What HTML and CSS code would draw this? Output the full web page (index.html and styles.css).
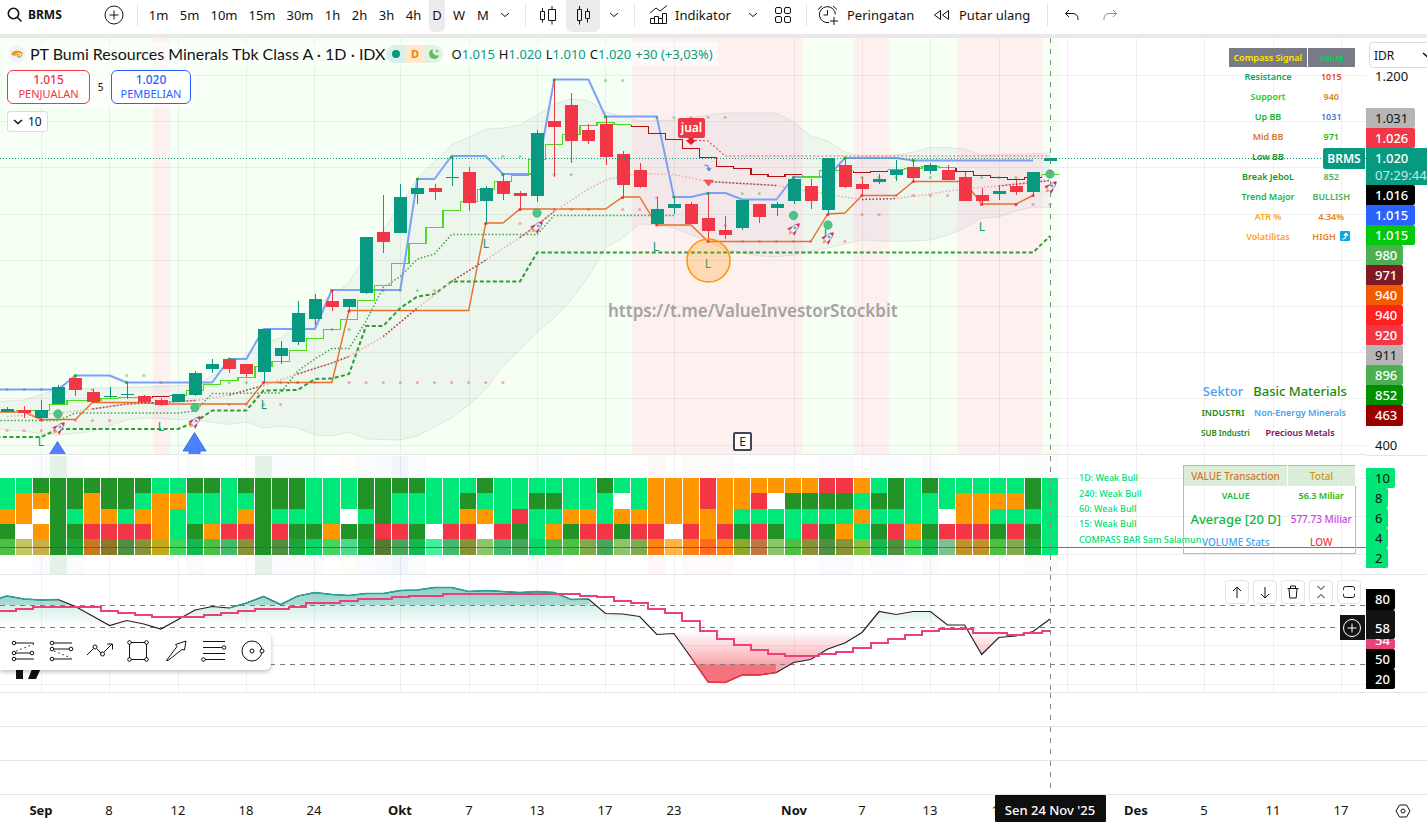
FILE: index.html
```html
<!DOCTYPE html>
<html lang="id">
<head>
<meta charset="utf-8">
<title>BRMS 1.020</title>
<link rel="stylesheet" href="styles.css">
</head>
<body>
<header class="toolbar">
  <button class="tool symbol"><svg width="16" height="16" viewBox="0 0 16 16" class="ico bold"><circle cx="6.5" cy="6.5" r="5.2"/><path d="M10.5 10.500l4 4"/></svg>BRMS</button>
  <button class="tool icon-only" aria-label="Bandingkan"><svg width="20" height="20" viewBox="0 0 20 20" class="ico"><circle cx="10" cy="10" r="9"/><path d="M10 5.500v9M5.500 10h9"/></svg></button>
  <span class="rule"></span>
  <nav class="intervals">
    <button class="tool mid">1m</button><button class="tool mid">5m</button><button class="tool wide">10m</button><button class="tool wide">15m</button><button class="tool wide">30m</button><button class="tool hour">1h</button><button class="tool hour">2h</button><button class="tool hour">3h</button><button class="tool hour">4h</button><button class="tool slim active">D</button><button class="tool week">W</button><button class="tool slim">M</button><button class="tool chev" aria-label="Interval"><svg width="10" height="6" viewBox="0 0 10 6" class="ico"><path d="M1 1l4 3.500 4-3.500"/></svg></button>
  </nav>
  <span class="rule"></span>
  <button class="tool candle" aria-label="Lilin"><svg width="20" height="20" viewBox="0 0 20 20" class="ico"><path d="M2.500 6.500h4v8h-4zM4.500 3v3.500M4.500 14.500v3M10.500 4.500h7v11h-7zM14 1v3.500M14 15.500v4"/></svg></button>
  <button class="tool candle active" aria-label="Jenis grafik"><svg width="20" height="20" viewBox="0 0 20 20" class="ico"><path d="M4.500 4.500h4v11h-4zM6.500 1v3.500M6.500 15.500v4M12.500 6.500h4v7h-4zM14.500 3.500v3M14.500 13.500v4"/></svg></button>
  <button class="tool chev" aria-label="Pilihan grafik"><svg width="10" height="6" viewBox="0 0 10 6" class="ico"><path d="M1 1l4 3.500 4-3.500"/></svg></button>
  <span class="rule"></span>
  <button class="tool labelled indicator"><svg width="20" height="20" viewBox="0 0 20 20" class="ico"><path d="M1 8l6-5 4 3 7-5.500M1.500 18.500v-5h4v5zM5.500 13.500v-2h4v7M9.500 13.500h4v5M13.500 13.500v-5h4v10h-12"/></svg>Indikator</button>
  <button class="tool chev" aria-label="Favorit"><svg width="10" height="6" viewBox="0 0 10 6" class="ico"><path d="M1 1l4 3.500 4-3.500"/></svg></button>
  <button class="tool icon-only" aria-label="Templat"><svg width="18" height="18" viewBox="0 0 18 18" class="ico"><rect x="1.500" y="1.500" width="6" height="6" rx="1.500"/><rect x="10.500" y="1.500" width="6" height="6" rx="1.500"/><rect x="1.500" y="10.500" width="6" height="6" rx="1.500"/><rect x="10.500" y="10.500" width="6" height="6" rx="1.500"/></svg></button>
  <span class="rule"></span>
  <button class="tool labelled alarm"><svg width="22" height="22" viewBox="0 0 22 22" class="ico"><path d="M18.400 10.500A8 8 0 1 0 12 18.500M10.500 6v5h-4M1 5.500L5 2M16 2l4 3.500M17 13v8M13 17h8"/></svg>Peringatan</button>
  <button class="tool labelled replay"><svg width="18" height="12" viewBox="0 0 18 12" class="ico"><path d="M7.500 1.500v9L1.500 6zM15.500 1.500v9L9.500 6z"/></svg>Putar ulang</button>
  <span class="rule"></span>
  <button class="tool history" aria-label="Urungkan"><svg width="16" height="12" viewBox="0 0 16 12" class="ico"><path d="M5 1L1.500 4.500 5 8M1.500 4.500H9a5 5 0 0 1 5 5v1.500"/></svg></button>
  <button class="tool history faded" aria-label="Ulangi"><svg width="16" height="12" viewBox="0 0 16 12" class="ico"><path d="M11 1l3.500 3.500L11 8M14.500 4.500H7a5 5 0 0 0-5 5v1.500"/></svg></button>
</header>

<main class="chart">
  <section class="pane price-pane">
    <svg class="plot" id="price"></svg>
    <div class="legend">
      <div class="legend-row">
        <svg width="18" height="18" viewBox="0 0 18 18"><circle cx="9" cy="9" r="9" fill="#f0f3fa"/><path d="M3 9c2-4 8-5 12-1l-1 2c-1-2-4-3-6-1h4v1.500H7L5.500 11 3 9z" fill="#e8a01c"/><path d="M9 11c2 2 4 1 5-1" stroke="#b5651d" fill="none"/></svg>
        <h1 class="title">PT Bumi Resources Minerals Tbk Class A · 1D · IDX</h1>
        <div class="status"><span class="st open"><i class="dot"></i></span><span class="st delay">D</span><span class="st night"><svg width="12" height="12" viewBox="0 0 12 12"><path d="M5 1a5 5 0 1 0 6 6A4.500 4.500 0 0 1 5 1z" fill="#66bb6a"/><path d="M9 1.500v3M7.500 3h3" stroke="#66bb6a"/></svg></span></div>
        <div class="ohlc"><span>O<b>1.015</b></span><span>H<b>1.020</b></span><span>L<b>1.010</b></span><span>C<b>1.020</b></span><b>+30 (+3,03%)</b></div>
      </div>
      <div class="trade">
        <button class="order sell"><strong>1.015</strong><span>PENJUALAN</span></button>
        <span class="spread">5</span>
        <button class="order buy"><strong>1.020</strong><span>PEMBELIAN</span></button>
      </div>
      <button class="collapse"><svg width="10" height="6" viewBox="0 0 10 6" class="ico bold"><path d="M1 1l4 3.500 4-3.500"/></svg>10</button>
    </div>
    <table class="compass">
      <thead><tr><th class="yellow">Compass Signal</th><th class="lime">Value</th></tr></thead>
      <tbody>
        <tr><td class="c-sea">Resistance</td><td class="c-red">1015</td></tr>
        <tr><td class="c-lime">Support</td><td class="c-gold">940</td></tr>
        <tr><td class="c-green">Up BB</td><td class="c-blue">1031</td></tr>
        <tr><td class="c-rust">Mid BB</td><td class="c-leaf">971</td></tr>
        <tr><td class="c-forest">Low BB</td><td></td></tr>
        <tr><td class="c-forest">Break JeboL</td><td class="c-soft">852</td></tr>
        <tr><td class="c-green">Trend Major</td><td class="c-soft">BULLISH</td></tr>
        <tr><td class="c-amber">ATR %</td><td class="c-orange">4.34%</td></tr>
        <tr><td class="c-amber">Volatilitas</td><td class="c-orange">HIGH <svg class="up" width="10" height="10" viewBox="0 0 10 10"><rect width="10" height="10" rx="1" fill="#0ea5e9"/><path d="M2.500 8C5.500 8 6 6.500 6 3M4 4.500l2-2 2 2" fill="none" stroke="#fff" stroke-width="1.400"/></svg></td></tr>
      </tbody>
    </table>
    <table class="sector">
      <tr class="lead"><td class="c-sky">Sektor</td><td class="c-dark">Basic Materials</td></tr>
      <tr><td class="c-dark">INDUSTRI</td><td class="c-sky">Non-Energy Minerals</td></tr>
      <tr><td class="c-dark tiny">SUB Industri</td><td class="c-plum">Precious Metals</td></tr>
    </table>
    <span class="ticker">BRMS</span>
  </section>
  <aside class="axis price-axis">
    <label class="currency"><select aria-label="Mata uang"><option>IDR</option></select><svg width="10" height="6" viewBox="0 0 10 6" class="ico bold"><path d="M1 1l4 3.500 4-3.500"/></svg></label>
    <span class="clipped">1.200</span>
    <div class="tags">
      <span class="tag t-grey">1.031</span><span class="tag t-red">1.026</span>
      <span class="tag last">1.020<small>07:29:44</small></span>
      <span class="tag t-black">1.016</span><span class="tag t-blue">1.015</span><span class="tag t-lime">1.015</span>
      <span class="tag short t-green">980</span><span class="tag short t-wine">971</span><span class="tag short t-orange">940</span><span class="tag short t-scarlet">940</span><span class="tag short t-red">920</span><span class="tag short t-grey">911</span><span class="tag short t-green">896</span><span class="tag short t-forest">852</span><span class="tag short t-maroon">463</span>
      <span class="plain">400</span>
    </div>
  </aside>

  <section class="pane bar-pane">
    <svg class="plot" id="bars"></svg>
    <table class="value">
      <thead><tr><th class="c-rust">VALUE Transaction</th><th class="c-gold2">Total</th></tr></thead>
      <tbody>
        <tr class="amount"><td class="c-green">VALUE</td><td class="c-leaf">56.3 Miliar</td></tr>
        <tr class="avg"><td class="c-green">Average [20 D]</td><td class="c-violet">577.73 Miliar</td></tr>
        <tr class="vol"><td class="c-sky">VOLUME Stats</td><td class="c-crimson">LOW</td></tr>
      </tbody>
    </table>
  </section>
  <aside class="axis bar-axis"><span class="tag n10">10</span><span class="tag n">8</span><span class="tag n">6</span><span class="tag n">4</span><span class="tag n">2</span></aside>

  <section class="pane osc-pane">
    <svg class="plot" id="osc"></svg>
    <div class="pane-tools">
      <button aria-label="Naik"><svg width="16" height="16" viewBox="0 0 16 16" class="ico"><path d="M8 14V3M4 7l4-4 4 4"/></svg></button>
      <button aria-label="Turun"><svg width="16" height="16" viewBox="0 0 16 16" class="ico"><path d="M8 3v11M4 10l4 4 4-4"/></svg></button>
      <button aria-label="Hapus"><svg width="16" height="16" viewBox="0 0 16 16" class="ico"><path d="M2.500 4.500h11M5.500 4V2h5v2M4 5l.8 9h6.400l.8-9"/></svg></button>
      <button aria-label="Ciutkan"><svg width="16" height="16" viewBox="0 0 16 16" class="ico"><path d="M4.500 2L8 5.500 11.500 2M4.500 14L8 10.500l3.500 3.500"/></svg></button>
      <button aria-label="Perbesar"><svg width="16" height="16" viewBox="0 0 16 16" class="ico"><path d="M2.500 6V4.500a2 2 0 0 1 2-2h7a2 2 0 0 1 2 2V6M2.500 10v1.500a2 2 0 0 0 2 2h7a2 2 0 0 0 2-2V10"/></svg></button>
    </div>
    <button class="add" aria-label="Tambah"><svg width="20" height="20" viewBox="0 0 20 20" class="ico"><circle cx="10" cy="10" r="8.500"/><path d="M10 5.500v9M5.500 10h9"/></svg></button>
    <div class="draw-tools">
      <button aria-label="Posisi beli"><svg width="26" height="26" viewBox="0 0 26 26" class="ico"><path d="M4.500 5H23M4.500 15H19M4.500 21H23"/><path d="M5 13L23 6" stroke-dasharray="1.500 3"/><circle cx="3" cy="5" r="1.800"/><circle cx="3" cy="15" r="1.800"/><circle cx="21" cy="15" r="1.800"/><circle cx="3" cy="21" r="1.800"/></svg></button>
      <button aria-label="Posisi jual"><svg width="26" height="26" viewBox="0 0 26 26" class="ico"><path d="M4.500 5H23M4.500 11H20M4.500 21H23"/><path d="M5 13L22 20" stroke-dasharray="1.500 3"/><circle cx="3" cy="5" r="1.800"/><circle cx="3" cy="11" r="1.800"/><circle cx="22" cy="11" r="1.800"/><circle cx="3" cy="21" r="1.800"/></svg></button>
      <button aria-label="Jalur"><svg width="26" height="26" viewBox="0 0 26 26" class="ico"><path d="M0 17l6.500-6.500M10 11l4 4M17 14l8-8M20 6h5.500v5.500"/><circle cx="8" cy="9" r="2"/><circle cx="15.500" cy="16" r="2"/></svg></button>
      <button aria-label="Persegi"><svg width="26" height="26" viewBox="0 0 26 26" class="ico"><path d="M6 4.500h14M6 21.500h14M4.500 6v14M21.500 6v14"/><circle cx="4.500" cy="4.500" r="1.800"/><circle cx="21.500" cy="4.500" r="1.800"/><circle cx="4.500" cy="21.500" r="1.800"/><circle cx="21.500" cy="21.500" r="1.800"/></svg></button>
      <button aria-label="Panah"><svg width="26" height="26" viewBox="0 0 26 26" class="ico"><path d="M3.500 22.500L14 8.500l-1.500-2L23 3l-1.500 9-2.500-.5L5 22.500z"/></svg></button>
      <button aria-label="Retracement"><svg width="26" height="26" viewBox="0 0 26 26" class="ico"><path d="M2 3.500h22M2 9.500h19M2 15.500h22M4 21.500h20"/><circle cx="23" cy="9.500" r="1.800"/><circle cx="2.500" cy="21.500" r="1.800"/></svg></button>
      <button aria-label="Lingkaran"><svg width="26" height="26" viewBox="0 0 26 26" class="ico"><circle cx="13" cy="13" r="10"/><circle cx="13" cy="13" r="2"/><circle cx="23" cy="13" r="2" fill="#fff"/></svg></button>
    </div>
  </section>
  <aside class="axis osc-axis"><span class="tag o80">80</span><span class="tag o58">58</span><span class="tag o54">54</span><span class="tag o50">50</span><span class="tag o50">20</span></aside>

  <section class="pane blank"><svg class="plot cross"></svg></section><aside class="axis"></aside>
  <section class="pane blank"><svg class="plot cross"></svg></section><aside class="axis"></aside>
  <section class="pane blank"><svg class="plot cross"></svg></section><aside class="axis"></aside>

  <section class="time"><svg class="plot" id="time"></svg></section>
  <aside class="time corner"><button aria-label="Pengaturan"><svg width="16" height="16" viewBox="0 0 16 16" class="ico"><path d="M4.500 2h7L15 8l-3.500 6h-7L1 8z"/><circle cx="8" cy="8" r="2"/></svg></button></aside>
</main>
<script src="chart.js"></script>
</body>
</html>
```
FILE: styles.css
```css
* { box-sizing: border-box; }
body { margin: 0; background: #fff; color: #131313; font: 14px/20px "Noto Sans", sans-serif; }
button { border: 0; background: none; padding: 0; margin: 0; font: inherit; color: inherit; cursor: pointer; }
.ico { fill: none; stroke: currentColor; stroke-width: 1; flex: none; }
.ico.bold { stroke-width: 1.6; }

.toolbar { display: flex; align-items: flex-start; height: 38px; border-bottom: 4px solid #e9e9ea; overflow: hidden; }
.tool { display: flex; align-items: center; justify-content: center; height: 32px; padding-bottom: 2px; border-radius: 0 0 6px 6px; font-size: 13px; white-space: nowrap; flex: none; }
.tool.active { background: #ebebeb; }
.symbol { width: 97px; justify-content: flex-start; gap: 5px; padding-left: 7px; font-weight: 700; font-size: 12px; }
.icon-only { width: 33px; }
.rule { width: 1px; height: 22px; margin: 4px 5px 0 7px; background: #e3e3e5; flex: none; }
.intervals { display: flex; }
.mid { width: 31px; }
.wide { width: 38px; }
.hour { width: 27px; }
.slim { width: 16px; margin-left: 2px; }
.week { width: 28px; }
.chev { width: 27px; }
.candle { width: 34px; margin-right: 1px; }
.candle.active { margin: 0; }
.labelled { justify-content: flex-start; }
.indicator { width: 99px; gap: 6px; padding-left: 9px; }
.alarm { width: 106px; gap: 8px; padding-left: 5px; }
.replay { width: 122px; gap: 8px; padding-left: 15px; }
.history { width: 38px; }
.faded { color: #8a8a8a; }

.chart { display: grid; grid-template-columns: minmax(0, 1fr) 61px; }
.pane, .axis { position: relative; border-bottom: 1px solid #e4e4e6; overflow: hidden; }
.plot { display: block; width: 100%; height: 100%; }
.price-pane { height: 417px; }
.bar-pane { height: 119px; }
.osc-pane { height: 118px; }
.blank { height: 34px; }

.legend { position: absolute; left: 3px; top: 4px; }
.legend-row { display: flex; align-items: center; height: 24px; padding: 0 5px; background: rgba(255,255,255,.6); }
.title { margin: 0 1px 0 4px; font-family: Lato, sans-serif; font-size: 16px; font-weight: 400; }
.status { display: flex; height: 18px; border-radius: 9px; overflow: hidden; font-size: 11px; font-weight: 700; }
.st { width: 19px; display: flex; align-items: center; justify-content: center; }
.open { background: #d8f0ea; }
.dot { width: 8px; height: 8px; border-radius: 4px; background: #089981; }
.delay { background: #ffe8cc; color: #f57c00; }
.night { background: #e0f2e1; }
.ohlc { display: flex; gap: 4px; margin-left: 8px; font-size: 13px; }
.ohlc b { font-weight: 400; color: #089981; }
.trade { display: flex; align-items: center; width: 192px; height: 42px; padding: 0 4px; background: rgba(255,255,255,.6); }
.order { display: flex; flex-direction: column; align-items: center; justify-content: center; height: 34px; border: 1px solid; border-radius: 6px; background: #fff; font-size: 11px; line-height: 14px; }
.order strong { font-size: 12px; font-weight: 500; }
.sell { width: 83px; color: #f23645; }
.buy { width: 80px; color: #2962ff; }
.spread { width: 21px; text-align: center; font-size: 10px; }
.collapse { display: flex; align-items: center; gap: 5px; height: 21px; margin: 3px 4px; padding: 0 5px; border: 1px solid #dcdcdf; border-radius: 3px; background: #fff; font-size: 12px; }

table { position: absolute; border-collapse: collapse; font-size: 9px; line-height: 20px; font-weight: 600; text-align: center; white-space: nowrap; table-layout: fixed; }
td, th { padding: 0; font-weight: 600; }
.compass { top: 10px; right: 10px; width: 127px; }
.compass th { height: 19px; line-height: 18px; background: #787b86; border-right: 1px solid #fff; }
.compass th:first-child { width: 78px; }
.compass td { height: 20px; }
.up { vertical-align: -1px; margin-left: 2px; }
.sector { top: 340px; right: 11px; width: 154px; }
.sector td { height: 20px; }
.sector td:first-child { width: 44px; }
.sector .lead td { height: 25px; font-size: 13px; font-weight: 500; }
.sector .tiny { font-size: 8px; }
.value { top: 9px; right: 10px; width: 173px; border: 1px solid #b6b8c0; }
.value th, .value td { font-weight: 500; font-size: 10px; }
.value th { height: 20px; background: rgba(205,232,206,.75); border-right: 1px solid #fff; }
.value th:first-child { width: 104px; }
.value .amount td { font-size: 9px; font-weight: 600; height: 19px; }
.value .avg td { height: 26px; }
.value .avg td:first-child { font-size: 13px; }
.value .vol td { height: 21px; }
.yellow { color: #ffe600; } .lime { color: #00d166; }
.c-sea { color: #00a86b; } .c-red { color: #e64a19; } .c-lime { color: #30c91c; } .c-gold { color: #c98a16; }
.c-green { color: #12b73c; } .c-blue { color: #4a6fd8; } .c-rust { color: #dc7428; } .c-leaf { color: #1bb80c; }
.c-forest { color: #129a25; } .c-soft { color: #4caf50; } .c-amber { color: #ffa01a; } .c-orange { color: #e58412; }
.c-sky { color: #40a2f7; } .c-dark { color: #218a09; } .c-plum { color: #880e4f; } .c-gold2 { color: #cc9d0c; }
.c-violet { color: #cf3cea; } .c-crimson { color: #f23645; }
.ticker { position: absolute; right: 1px; top: 110px; width: 42px; height: 21px; border-radius: 2px 0 0 2px; background: #089981; color: #fff; font-weight: 600; font-size: 12px; line-height: 21px; text-align: center; }

.price-axis { display: flex; flex-direction: column; }
.currency { position: relative; margin: 4px 0 0 3px; }
.currency svg { position: absolute; left: 53px; top: 10px; }
.currency select { display: block; width: 70px; height: 26px; padding: 0 0 0 4px; border: 1px solid #dcdcdf; border-radius: 4px; background: #fff; color: #131313; font: 12px "Noto Sans", sans-serif; appearance: none; }
.clipped { height: 15px; margin-top: 3px; padding-left: 9px; font-size: 13px; line-height: 10px; }
.tags { display: flex; flex-direction: column; align-items: flex-start; margin-top: 22px; }
.tag, .plain { width: 49px; height: 20px; padding-left: 9px; border-radius: 0 2px 2px 0; font-size: 13px; line-height: 20px; font-weight: 500; color: #fff; }
.short { width: 37px; }
.plain { color: #131313; font-weight: 400; margin-top: 9px; }
.last { width: 61px; height: 37px; background: #089981; border-radius: 0; }
.last small { display: block; font-size: 13px; line-height: 14px; font-weight: 400; color: #c9ebe5; }
.t-grey { background: #b6b6b6; color: #131313; font-weight: 400; } .t-red { background: #f23645; } .t-black { background: #000; }
.t-blue { background: #2962ff; } .t-lime { background: #00c80a; } .t-green { background: #4caf50; } .t-wine { background: #801922; }
.t-orange { background: #f05a00; } .t-scarlet { background: #ff2020; } .t-forest { background: #009000; } .t-maroon { background: #990000; height: 21px; }
.bar-axis { padding-top: 12px; display: flex; flex-direction: column; }
.n, .n10 { background: #00e676; color: #131313; width: 29px; font-weight: 400; }
.n { width: 22px; }
.osc-axis { padding-top: 14px; display: flex; flex-direction: column; }
.osc-axis .tag { width: 29px; background: #000; }
.osc-axis .o80 { height: 21px; }
.osc-axis .o58 { height: 29px; line-height: 36px; background: #131313; }
.osc-axis .o54 { height: 10px; line-height: 2px; background: #ec407a; overflow: hidden; }

.pane-tools { position: absolute; right: 5px; top: 5px; display: flex; gap: 4px; }
.pane-tools button { display: flex; align-items: center; justify-content: center; width: 24px; height: 24px; border: 1px solid #e4e4e6; border-radius: 4px; background: #fff; }
.add { position: absolute; right: 1px; top: 40px; width: 25px; height: 25px; padding: 2px; background: #131313; color: #fff; }
.add svg { display: block; }
.draw-tools { position: absolute; left: 0; top: 57px; display: flex; gap: 12px; height: 38px; padding: 0 6px 0 11px; align-items: center; border-radius: 0 6px 6px 0; background: #fff; box-shadow: 0 2px 4px rgba(0,0,0,.25); }
.draw-tools svg { display: block; }
.time { height: 33px; border-bottom: 1px solid #e4e4e6; }
.corner { display: flex; align-items: center; justify-content: center; padding-left: 12px; }
.corner svg { display: block; }
svg text { font-family: "Noto Sans", sans-serif; }
```
FILE: chart.js
```js
const X = i => 7 + 17.1 * i;
const MONTH_TICKS = [41, 109, 178, 246, 314, 400, 469, 537, 605, 674, 794, 862, 930, 999, 1067, 1136, 1204, 1273, 1341];
const CROSS = 1050;

const line = (x1, y1, x2, y2, attrs) => `<line x1="${x1}" y1="${y1}" x2="${x2}" y2="${y2}" ${attrs}/>`;
const rect = (x, y, w, h, fill, extra = '') => `<rect x="${x}" y="${y}" width="${w}" height="${h}" fill="${fill}" ${extra}/>`;
const label = (x, y, s, attrs) => `<text x="${x}" y="${y}" ${attrs}>${s}</text>`;
const points = list => list.map(([i, y]) => `${X(i)},${y}`).join(' ');
const poly = (list, attrs) => `<polyline points="${points(list)}" fill="none" ${attrs}/>`;
const crosshair = h => line(CROSS + .5, 0, CROSS + .5, h, 'stroke="#888" stroke-dasharray="5 6"');

function grid(top, bottom, rows) {
  return MONTH_TICKS.map(x => line(x + .5, top, x + .5, bottom, 'stroke="#000" stroke-opacity=".06"')).join('') +
    rows.map(y => line(0, y + .5, 4000, y + .5, 'stroke="#000" stroke-opacity=".06"')).join('');
}

function steps(list) {
  let d = '';
  list.forEach(([i, y], k) => {
    const end = k + 1 < list.length ? list[k + 1][0] - .5 : i + .5;
    d += `${k ? 'L' : 'M'}${X(i - .5)} ${y}L${X(end)} ${y}`;
  });
  return d;
}

function pricePane() {
  const candles = `G409,412,407,412 R410,413,406,418 G410,418,400,420 G387,404,385,404 R378,390,375,396 R392,402,389,403
    G396,397,387,398 G394,395,383,399 R396,402,395,403 R400,405,398,406 G394,402,394,402 G373,395,371,396 G364,369,359,373
    R359,369,358,373 R364,374,364,377 G329,372,329,383 G348,356,341,364 G313,342,301,345 G299,319,294,325 R301,307,291,311
    G299,307,299,311 G237,293,237,294 R232,242,195,253 G197,233,184,233 G188,194,179,204 R188,192,184,200 G177,178,157,186
    R172,203,167,211 G188,201,186,223 R181,194,174,200 R193,196,191,209 G133,196,130,202 R121,127,80,177 R105,141,93,163
    R130,141,124,144 R124,157,117,165 R154,185,151,197 R170,187,163,188 G209,224,197,225 G204,208,197,214 R204,224,202,224
    R218,231,193,241 R230,235,216,239 G200,228,200,230 R204,217,204,223 G204,208,202,216 G179,201,177,204 R186,201,179,209
    G158,210,158,214 R165,187,158,188 R184,189,177,195 G179,182,174,184 G170,175,160,181 R167,178,160,181 G165,171,163,174
    R170,180,165,180 R177,201,172,201 R195,201,188,204 G191,194,186,200 R186,192,180,195 G172,192,172,195 G158,161,158,161`.trim().split(/\s+/);
  const blue = [[-1,389.500],[3,389.500],[4,375.500],[6,375.500],[7,382.500],[12,382.500],[13,359],[14,359],[15,329],[18,329],[19,290],[23,290],[24,179],[25,179],[26,156],[28,156],[29,174],[31,174],[32,79.500],[34,79.500],[35,116.500],[38,116.500],[39,197],[40,197],[41,193],[42,193],[43,199.500],[45,199.500],[46,177],[48,177],[49,158],[52,158],[53,160.500],[60,160.500]];
  const orange = [[-1,412],[1,412],[2,419.500],[4,419.500],[5,402.500],[8,402.500],[9,404],[14,404],[15,382.500],[19,382.500],[20,310.500],[27,310.500],[28,223],[29,223],[30,209],[35,209],[36,197],[37,197],[38,225],[40,225],[41,241.500],[47,241.500],[48,214],[49,213],[50,195.500],[52,195.500],[53,181.500],[56,181.500],[57,204],[59,204],[60,195.500]];
  const thick = [[-1,437],[2,437],[3,429],[10,429],[11,422],[12,410.500],[14,410.500],[15,390.500],[17,390],[18,379],[19,378.500],[20,374],[21,326],[22,326],[23,308],[24,296.500],[25,294],[26,281.500],[30,281.500],[31,252.500],[60,252.500],[61,236]];
  const thin = [[-1,420.500],[3,420.500],[4,413],[10,413],[11,411],[12,393.500],[16,393],[17,371],[18,359],[19,348.500],[20,348.500],[21,321],[22,287.500],[23,276.500],[24,259],[25,254],[26,234.500],[31,234.500],[32,215.500],[39,215.500]];
  const mid = [[0,416.500],[3,413],[5,409],[7,404],[9,402.500],[11,400.500],[13,395],[15,385.500],[17,374],[19,363],[20,356.500],[21,346.500],[22,336.500],[24,308],[26,281.500],[28,260],[30,237.500],[31,225],[32,211.500],[34,189],[35,180],[36,176.500],[37,173.500],[39,174.500],[41,181.500],[43,183.500],[45,185.500],[47,191.500],[49,197],[50,199.500],[52,198.500],[54,194],[56,188.500],[58,186],[61,180.500]];
  const upper = [[-1,402],[1,400],[3,389],[8,387],[11,385],[13,366],[15,343],[16,338],[17,323],[18,304],[19,297],[20,282],[21,255],[22,230],[23,205],[24,178],[26,145],[28,129],[29,128],[30,125],[31,115],[32,104],[33,99],[34,100.500],[35,112],[37,121],[39,120],[41,115],[42,113],[45,113],[46,122],[47,136],[48,141],[49,152],[50,156],[52,155],[53,152],[54,147.500],[55,147.500],[56,149],[57,155],[61,153]];
  const lower = [[-1,428],[3,435],[5,431.500],[7,420],[8,418],[11,420],[13,424.500],[14,422],[15,428],[16,426],[17,428],[18,435],[19,436],[20,432],[21,439],[23,440],[24,436],[26,418],[27,405],[28,389],[29,366],[30,350],[31,332],[32,318],[33,300],[34,277],[35,248],[36,238],[37,224],[38,225],[39,228],[40,235],[41,241],[42,250],[44,256],[45,257],[46,255],[48,248],[50,240],[52,241.500],[54,240],[55,235],[56,228],[57,218],[58,217],[59,211],[60,207],[61,207.500]];
  const trend = [410.500,410.500,404.500,400.500,400.500,398.500,397.500,397.500,396.500,395.500,390.500,384.500,380.500,377.500,366.500,361.500,350.500,338.500,329.500,319.500,300.500,285.500,263.500,243.500,227.500,210.500,201.500,189.500,181.500,175.500,159.500,144.500,134.500,125.500,122.500,124.500,126.500,133.500,139.500,148.500,157.500,166.500,168.500,174.500,176.500,174.500,176.500,170.500,170.500,172.500,171.500,169.500,168.500,166.500,167.500,171.500,175.500,177.500,179.500,177.500,174.500].map((y, k) => [k + 1, y]);
  const run = (a, b, colour) => {
    const part = trend.slice(a - 1, b), prev = trend[a - 2];
    const join = prev ? `M${X(a - .5)} ${prev[1]}V${part[0][1]}` : '';
    return `<path d="${join}${steps(part)}" fill="none" stroke="${colour}" stroke-width="1.300" shape-rendering="crispEdges"/>`;
  };

  let s = rect(0, 0, 1060, 417, '#f6fff3');
  [[153, 17], [632, 171], [854, 35], [957, 86]].forEach(([x, w]) => s += rect(x, 0, w, 417, '#fdf1f0'));
  s += '<g transform="translate(0 -38)">' + grid(38, 455, [75, 121, 167, 214, 260, 306, 352, 398, 445]);
  s += `<polygon points="${points(upper)} ${points([...lower].reverse())}" fill="#5b6a90" fill-opacity=".06"/>`;
  s += poly(upper, 'stroke="#888" stroke-opacity=".18"') + poly(lower, 'stroke="#888" stroke-opacity=".18"');
  s += poly(blue, 'stroke="#7f9ff8" stroke-width="2" stroke-linejoin="round"');
  s += poly(orange, 'stroke="#e8702a" stroke-width="1.400"');
  s += poly(thick, 'stroke="#2e9e33" stroke-width="2" stroke-dasharray="4 2.500"');
  s += poly(thin, 'stroke="#43a047" stroke-width="1.500" stroke-dasharray="1.500 2"');
  s += poly(mid, 'stroke="#f4a6a6" stroke-width="1.500" stroke-dasharray="1.500 2"');
  [[5, 11], [13, 15], [17, 20], [22, 24], [26, 28], [30, 32], [41, 45], [50, 52], [58, 61]].forEach(([a, b]) => s += poly(mid.filter(p => p[0] >= a && p[0] <= b), 'stroke="#8d4b50" stroke-width="1.500" stroke-dasharray="1.500 2"'));
  s += poly([[40,140],[41,141],[42,156],[61,156]], 'stroke="#f0555f" stroke-width="1.200" stroke-dasharray="2 2"');
  [[1, 8], [10, 36], [47, 49], [52, 55], [61, 61]].forEach(([a, b]) => s += run(a, b, '#4ddb1c'));
  [[9, 9], [37, 46], [50, 51], [56, 60]].forEach(([a, b]) => s += run(a, b, '#b71010'));
  const dots = (list, fill) => list.forEach(([y, ...is]) => is.forEach(i => s += `<circle cx="${X(i)}" cy="${y}" r="1.600" fill="${fill}" fill-opacity=".4"/>`));
  candles.forEach((c, i) => {
    const [t, b, h, l] = c.slice(1).split(',').map(Number), col = c[0] === 'G' ? '#089981' : '#f23645', x = Math.round(X(i));
    s += rect(x, h, 1, l - h, col) + rect(x - 6, t, 13, b - t, col);
  });
  dots([[389.500,0,1,2,5],[375.500,7,8],[382.500,9,11,13,14,16,17],[329.500,19,20],[290.500,22,23,24,25],[156.500,29,30],[174.500,32,33],[80.500,35,36],[117.500,38,39,40,41,42],[193.500,43,44],[177.500,50,51,52,54,57,58,59]], '#2e9e33');
  dots([[430.500,0,1,2],[420.500,4,5,6],[404.500,13,14,15,16],[382.500,17,18,20,21,22,23,24,25,26,27,28,29],[223.500,30],[209.500,32,33,34,36,37],[197.500,38],[225.500,42],[241.500,43,44,45,46,47,49],[214.500,50,51],[195.500,52,53,54,55],[204.500,60,61]], '#f23645');
  const pivots = (list, fill) => list.forEach(([i, y]) => s += `<circle cx="${X(i)}" cy="${y}" r="1.600" fill="${fill}"/>`);
  pivots([[4,375.500],[7,382.500],[13,359],[24,179],[26,157],[29,174.500],[32,80],[35,117],[39,197],[41,193.500],[46,177.500],[49,158],[53,160.500]], '#1fae2b');
  pivots([[2,420],[15,382.500],[19,290.500],[20,311],[28,223.500],[30,209.500],[36,197.500],[38,225],[41,241.500],[48,214.500],[50,195.500],[53,181.500],[57,204.500],[59,204.500],[60,195.500]], '#f23645');
  s += line(0, 158.5, 4000, 158.5, 'stroke="#089981" stroke-dasharray="1 2"');
  [[41,446],[161,431],[264,409],[486,248],[656,251],[827,238],[982,231]].forEach(([x, y]) => s += label(x, y, 'L', 'font-size="12" fill="#089981" text-anchor="middle"'));
  s += '<circle cx="708.500" cy="260.500" r="21.500" fill="#ff9800" fill-opacity=".25" stroke="#ff9800" stroke-width="1.600"/>' + label(708, 268, 'L', 'font-size="12" fill="#3f9a62" text-anchor="middle"');
  [[58,414],[195,407.500],[537,213],[793.500,215.500],[828,225],[1050,174]].forEach(([x, y]) => s += `<circle cx="${x}" cy="${y}" r="4.200" fill="#4cc487" stroke="#2fae6b" stroke-width=".6"/>`);
  [[59,428],[195,422],[537,227],[794,229],[828,238],[1051,187]].forEach(([x, y]) => s += `<g transform="translate(${x} ${y}) rotate(45)"><path d="M-3.500 0L-5 5l2.500-1.500h5L5 5 3.500 0z" fill="#d81b50"/><path d="M0-7.500C3-4.500 3 1 2.200 4h-4.400C-3 1-3-4.500 0-7.500z" fill="#eceff4" stroke="#b3476a" stroke-width=".7"/><path d="M0-7.500L-1.800-4.500h3.600z" fill="#d81b50"/><circle cy="-1.500" r="1.300" fill="#4aa3df"/><path d="M-1.500 4.500h3L0 8z" fill="#ff9a3c"/></g>`);
  s += '<path d="M57.500 441.500L66 455H49z M194.500 432.500L206 451h-6v5h-11v-5h-6z" fill="#4f80ff" stroke="#2f62e8" stroke-width=".8"/>';
  s += '<path d="M704 180h9l-4.500 6z" fill="#ff5252" stroke="#d84343" stroke-width=".6"/><path d="M704.500 165c3 0 4.500 1 4.500 5M707 168l2 2.500 2-2.500" fill="none" stroke="#4a78f0" stroke-width="1.200"/>';
  s += rect(678, 118, 27, 20, '#f23645', 'rx="2"') + '<path d="M685.500 140h3v-2h5v2h3l-5.500 5z" fill="#e02030"/>' + label(691.5, 132, 'jual', 'font-size="12" font-weight="600" fill="#fff" text-anchor="middle"');
  s += label(608, 317, 'https://t.me/ValueInvestorStockbit', 'font-size="17" font-weight="600" fill="#a3a3a3"');
  s += rect(734, 433, 17, 17, '#fff', 'rx="1" stroke="#434651" stroke-width="2"') + label(742.5, 446, 'E', 'font-size="12" fill="#222" text-anchor="middle"');
  s += '</g>' + crosshair(417);
  document.getElementById('price').innerHTML = s;
}

function barPane() {
  const colours = { G: '#00e878', D: '#229427', O: '#ff9800', R: '#f33645', W: '#ffffff' };
  const columns = `GGOD4bc045 GOOWbfc65f DOWOc9ae4a DDDD229427 DDGD1ba63a DOORc67a1d DDOR8d7a28 DDGR4f9141 DGOR879336 GOOObfaa1f
    GOGG41d65c DGGD13b850 DGGO4bc045 GGGR41ba6c DGOR879336 DDDD229427 DDGR4f9141 DDGD1ba63a GGGD0ad465 GGGO41d65c
    GGWD4bd98a DDGD1ba63a DDDR567a2e DGGR48a65a DGGD13b850 GGGW40f09a GGGR41ba6c GDOR879336 DGOW8cc469 GGGR41ba6c
    GGRD48a65a GDGG0ad465 GDGO4bc045 GGOD4bc045 GGOR7faa4e DGGR48a65a GWOD8cc469 GGOR7faa4e OOORff8212 OOOWffb340
    OOORff8212 RROOff6a22 OOORff8212 OOGD8caa29 ORGRbf7745 OWGD8cc469 ODGG4bc045 ODGR879336 RDGD4f9141 RDGO879336
    OGOG83c23a GDGD13b850 DDGR4f9141 GGGO41d65c DGGD13b850 GGWR7dc18f GOORbf922c GOORbf922c GOGD4bc045 GOGR7faa4e
    DDGD1ba63a GGGG00e878`.trim().split(/\s+/);
  const shade = { 2: '#fafbff', 3: '#e4f2e5', 4: '#f9fcfb', 11: '#f9fcfb', 15: '#e4f2e5', 16: '#fafbff', 17: '#f9fcfb', 18: '#f9fcfb', 20: '#fffdf8', 21: '#f9fbfd', 22: '#f9fafe', 23: '#f3f5fe', 24: '#fafcfb', 31: '#fafcfb', 32: '#fafbff', 34: '#fffefa', 38: '#fff8f6', 40: '#fffafa', 41: '#fffafa', 42: '#fffafa', 48: '#fafbff', 49: '#fafbff', 51: '#f9fcfb', 52: '#fafbff', 54: '#f9fcfb', 60: '#f9fcfb', 61: '#f9fcfb' };
  const tops = [477, 492, 508, 523, 538, 554];
  let s = '<g transform="translate(0 -455)">';
  for (const i in shade) s += rect(X(+i) - 8.5, 455, 17.1, 120, shade[i]);
  s += grid(455, 575, [477, 515, 553]);
  columns.forEach((c, i) => {
    const x = Math.round(X(i) - 8.5), w = Math.round(X(i + 1) - 8.5) - x - 1;
    for (let r = 0; r < 5; r++) s += rect(x, tops[r], w, tops[r + 1] - tops[r], r < 4 ? colours[c[r]] : '#' + c.slice(4));
  });
  s += line(0, 546.5, 4000, 546.5, 'stroke="#555" stroke-opacity=".8"');
  ['1D: Weak Bull', '240: Weak Bull', '60: Weak Bull', '15: Weak Bull', 'COMPASS BAR Sam Salamun'].forEach((t, k) =>
    s += label(1079, [480, 496, 511, 526, 542][k], t, 'font-size="9" font-weight="500" fill="#00dd72"'));
  document.getElementById('bars').innerHTML = s + '</g>' + crosshair(120);
}

function oscPane() {
  const wave = [[-1,600],[0,595],[1,598],[2,599],[3,598.500],[4,605.500],[5,615],[6,624.500],[7,619.500],[8,623],[9,628],[11,609],[12,605.500],[13,607],[14,602],[15,595.500],[16,603.500],[17,595],[18,591.500],[19,593.500],[20,594.500],[21,592.500],[22,592.500],[23,589.500],[24,589],[25,586.500],[26,586.500],[27,590.500],[28,589.500],[29,590.500],[30,591.500],[31,590.500],[32,591.500],[33,598.500],[34,598],[35,612.500],[36,613],[37,615.500],[38,633.500],[39,632.500],[40,656.500],[41,681],[42,681.500],[43,674],[44,674],[45,671.500],[46,661.500],[47,658.500],[48,648],[49,642],[50,631.500],[51,610.500],[52,613.500],[53,610.500],[54,610.500],[55,624],[56,624],[57,653.500],[58,636.500],[59,635],[60,630.500],[61,618]];
  const signal = [[0,610],[1,608],[2,606],[6,610],[7,612],[8,614],[9,616],[12,614],[13,612],[14,610],[15,608],[17,606],[18,602],[20,600],[21,598],[23,596],[24,595],[26,593],[34,595],[35,596],[36,600],[37,602],[38,608],[39,612],[40,620],[41,630],[42,638],[43,644],[44,649],[45,653],[46,655],[48,653],[49,651],[50,647],[51,642],[52,638],[53,634],[54,630],[55,628],[57,632],[59,634],[60,632],[61,630]];
  const area = `${X(-1)},626.500 ${points(wave)} ${X(61)},626.500`;
  const dash = 'stroke="#7a7a7a" stroke-dasharray="5 5"';
  let s = `<defs><linearGradient id="up" gradientUnits="userSpaceOnUse" x1="0" y1="587" x2="0" y2="627"><stop offset="0" stop-color="#089981" stop-opacity=".3"/><stop offset="1" stop-color="#089981" stop-opacity="0"/></linearGradient>
    <linearGradient id="down" gradientUnits="userSpaceOnUse" x1="0" y1="630" x2="0" y2="664"><stop offset="0" stop-color="#f23645" stop-opacity="0"/><stop offset="1" stop-color="#f23645" stop-opacity=".45"/></linearGradient>
    <clipPath id="above"><rect x="0" y="570" width="1200" height="56.500"/></clipPath><clipPath id="over"><rect x="0" y="570" width="589" height="34"/></clipPath>
    <clipPath id="below"><rect x="0" y="626.500" width="1200" height="70"/></clipPath><clipPath id="under"><rect x="0" y="663.500" width="776" height="30"/></clipPath></defs>
    <g transform="translate(0 -574)">` + grid(574, 693, [644, 683]);
  s += `<polygon points="${area}" fill="url(#up)" clip-path="url(#above)"/><polygon points="${area}" fill="#089981" fill-opacity=".2" clip-path="url(#over)"/>`;
  s += `<polygon points="${area}" fill="url(#down)" clip-path="url(#below)"/><polygon points="${area}" fill="#f23645" fill-opacity=".45" clip-path="url(#under)"/>`;
  [604.5, 626.5, 663.5].forEach(y => s += line(0, y, 4000, y, dash));
  s += poly(wave, 'stroke="#222" stroke-width="1.200"');
  s += poly(wave.filter(p => p[0] <= 3), 'stroke="#26a69a" stroke-width="1.300"') + poly(wave.filter(p => p[0] >= 13 && p[0] <= 34), 'stroke="#26a69a" stroke-width="1.300"');
  s += poly(wave.filter(p => p[0] >= 40 && p[0] <= 45), 'stroke="#f23645" stroke-width="1.300"');
  s += `<path d="M-2 610H0${steps(signal.slice(0, -1))}V630H1050" fill="none" stroke="#ec407a" stroke-width="2" shape-rendering="crispEdges"/>`;
  s += '<path d="M10 663h13v15h-7v-9h-6zM34 663h9l-7 15h-8z" fill="#111"/></g>';
  document.getElementById('osc').innerHTML = s + crosshair(118);
}

function timeAxis() {
  const names = ['Sep', '8', '12', '18', '24', 'Okt', '7', '13', '17', '23', 'Nov', '7', '13', '19', '', 'Des', '5', '11', '17'];
  let s = names.map((n, k) => label(MONTH_TICKS[k], 20, n, `font-size="13" text-anchor="middle" fill="#131313" font-weight="${isNaN(n) ? 700 : 400}"`)).join('');
  s += rect(995, 0, 111, 27, '#0f0f0f', 'rx="1"') + label(1050, 20, "Sen 24 Nov '25", 'font-size="13" font-weight="500" fill="#fff" text-anchor="middle"');
  document.getElementById('time').innerHTML = s;
}

pricePane();
barPane();
oscPane();
timeAxis();
document.querySelectorAll('.cross').forEach(el => el.innerHTML = crosshair(34));
```
